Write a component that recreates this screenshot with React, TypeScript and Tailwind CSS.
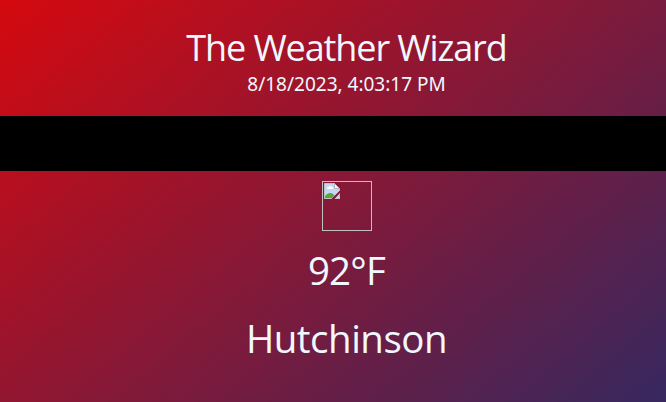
function BrokenImage() {
  return (
    <svg width="16" height="16" viewBox="0 0 16 16" aria-hidden="true">
      <path d="M.5.5h10l5 5v2L7.500 15.500H.5z" fill="#c3d6f5" stroke="#c0c0c0" />
      <path d="M3 6c0-1.400.5-2 1.500-2 .5-1.500 3-1.500 3.500 0C9 4 9.500 5 9.500 6z" fill="#fff" />
      <path d="M1 15v-2c2-3 6-4 8-2l1.500 1.500L8 15z" fill="#55a83a" />
      <path d="M10.500.5v5h5z" fill="#f4f4f4" stroke="#b4b4b4" />
      <path d="M16 10v6h-5.500z" fill="#c3d6f5" />
      <path d="M15.500 11v4.500H11" fill="none" stroke="#c0c0c0" />
    </svg>
  );
}

export default function App() {
  return (
    <main className="flex h-[402px] w-[666px] flex-col overflow-hidden bg-[linear-gradient(140deg,#d5090f,#36285f)] font-['Open_Sans','Noto_Sans',sans-serif] text-[#f0f8ff]">
      <header className="flex h-[116px] flex-col items-center pl-[27px] pt-[24px]">
        <h1 className="whitespace-nowrap text-[36px] leading-[48px] tracking-[-1.1px]">The Weather Wizard</h1>
        <p className="-mt-px whitespace-nowrap font-['Noto_Sans',sans-serif] text-[19px] leading-[26px]">8/18/2023, 4:03:17 PM</p>
      </header>
      <div className="h-[55px] shrink-0 bg-black" />
      <section className="flex flex-col items-center pl-[27px] pt-[10px]">
        <div className="h-[50px] w-[50px] border border-[#c0c0c0] p-px">
          <BrokenImage />
        </div>
        <p className="mt-[13px] text-[38.5px] leading-[52px] tracking-[-0.8px]">92°F</p>
        <p className="mt-[16px] text-[38.5px] leading-[52px] tracking-[-0.5px]">Hutchinson</p>
      </section>
    </main>
  );
}
